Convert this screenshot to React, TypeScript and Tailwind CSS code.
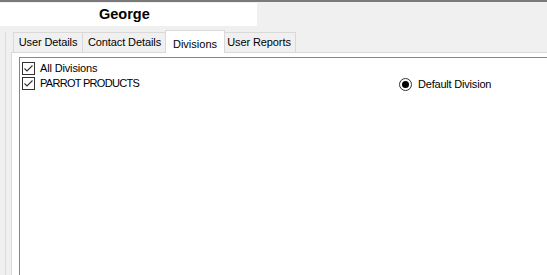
import React from "react";

const font = { fontFamily: '"Liberation Sans", Arial, sans-serif' };

function Check() {
  return (
    <div className="w-[13px] h-[13px] border border-[#333333] bg-white flex items-center justify-center shrink-0">
      <svg width="11" height="11" viewBox="0 0 11 11">
        <path d="M1.5 5.5 L4 8 L9.5 2.5" fill="none" stroke="#333333" strokeWidth="1.1" />
      </svg>
    </div>
  );
}

function Tab({ label, w, selected }: { label: string; w: number; selected?: boolean }) {
  if (selected) {
    return (
      <div
        className="h-[23px] -mx-[2px] mb-[-1px] relative z-10 bg-white border border-b-0 border-[#d9d9d9] flex items-start justify-center pt-[5px] text-[11px] text-black"
        style={{ width: w + 4 }}
      >
        {label}
      </div>
    );
  }
  return (
    <div
      className="h-[20px] bg-[#f0f0f0] border border-b-0 border-[#d9d9d9] -ml-px first:ml-0 flex items-center justify-center text-[11px] text-black tracking-[-0.1px]"
      style={{ width: w }}
    >
      {label}
    </div>
  );
}

export default function App() {
  return (
    <div className="w-[547px] h-[275px] bg-[#f0f0f0] overflow-hidden flex flex-col" style={font}>
      <div className="h-[2px] bg-[#7a7a7a] shrink-0" />
      <div className="h-[24px] shrink-0 pt-px">
        <div className="w-[257px] h-[23px] bg-white flex items-center pl-[99px] text-[14.5px] font-bold text-black">
          George
        </div>
      </div>
      <div className="flex flex-1 min-h-0">
        <div className="w-[6px] pt-[6px] shrink-0">
          <div className="h-full border-r border-[#dadada]" />
        </div>
        <div className="w-[5px] shrink-0" />
        <div className="flex-1 flex flex-col min-w-0">
          <div className="h-[26px] shrink-0 flex items-end pl-[2px]">
            <Tab label="User Details" w={70} />
            <Tab label="Contact Details" w={85} />
            <Tab label="Divisions" w={56} selected />
            <Tab label="User Reports" w={74} />
          </div>
          <div className="flex-1 bg-white border-l border-t border-[#d9d9d9] pl-[7px] pt-[4px] min-w-0">
            <div className="h-full w-[600px] bg-white border-l border-t border-[#828790] flex">
              <div className="w-[379px] pl-[2px] pt-[3px] flex flex-col shrink-0">
                <div className="h-[15px] flex items-center">
                  <Check />
                  <span className="ml-[5px] text-[11px] text-black leading-none tracking-[-0.15px]">All Divisions</span>
                </div>
                <div className="h-[15px] flex items-center">
                  <Check />
                  <span className="ml-[5px] text-[11px] text-black leading-none tracking-[-0.7px]">PARROT PRODUCTS</span>
                </div>
              </div>
              <div className="pt-[20px] flex items-start">
                <div className="flex items-center h-[13px]">
                  <div className="w-[13px] h-[13px] rounded-full border border-[#333333] bg-white flex items-center justify-center">
                    <div className="w-[7px] h-[7px] rounded-full bg-black" />
                  </div>
                  <span className="ml-[6px] text-[11px] text-black leading-none tracking-[-0.2px]">Default Division</span>
                </div>
              </div>
            </div>
          </div>
        </div>
      </div>
    </div>
  );
}
